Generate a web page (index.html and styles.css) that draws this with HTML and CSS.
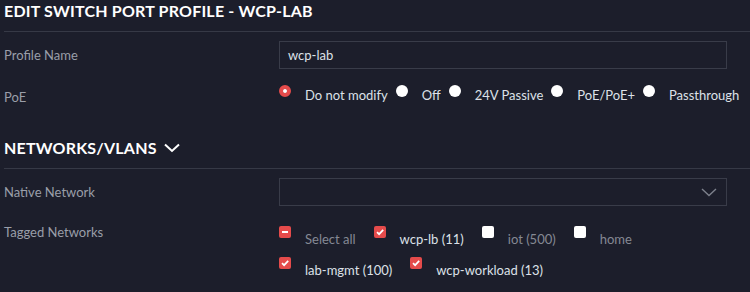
FILE: index.html
```html
<!DOCTYPE html>
<html lang="en">
<head>
    <meta charset="UTF-8">
    <title>Edit Switch Port Profile</title>
    <link rel="stylesheet" href="styles.css">
</head>
<body>

<div class="page">
    <h1 class="section-title first">Edit Switch Port Profile - wcp-lab</h1>

    <div class="row row-profile">
        <div class="label">Profile Name</div>
        <div class="control">
            <div class="text-input">wcp-lab</div>
        </div>
    </div>

    <div class="row row-poe">
        <div class="label label-poe">PoE</div>
        <div class="control options">
            <div class="option"><span class="radio checked"></span><span class="option-text">Do not modify</span></div>
            <div class="option"><span class="radio"></span><span class="option-text">Off</span></div>
            <div class="option"><span class="radio"></span><span class="option-text">24V Passive</span></div>
            <div class="option"><span class="radio"></span><span class="option-text">PoE/PoE+</span></div>
            <div class="option"><span class="radio"></span><span class="option-text">Passthrough</span></div>
        </div>
    </div>

    <h2 class="section-title">
        Networks/VLANs
        <svg class="title-chevron" width="16" height="10" viewBox="0 0 16 10">
            <path d="M1 1.5 L8 8 L15 1.5" fill="none" stroke="#ffffff" stroke-width="2"/>
        </svg>
    </h2>

    <div class="row row-native">
        <div class="label">Native Network</div>
        <div class="control">
            <div class="select">
                <svg class="select-chevron" width="16" height="9" viewBox="0 0 16 9">
                    <path d="M1 1 L8 7.5 L15 1" fill="none" stroke="#7d818c" stroke-width="1.4"/>
                </svg>
            </div>
        </div>
    </div>

    <div class="row row-tagged">
        <div class="label">Tagged Networks</div>
        <div class="control checks">
            <div class="check-line">
                <div class="check-item"><span class="box partial"><span class="dash"></span></span><span class="check-text muted">Select all</span></div>
                <div class="check-item"><span class="box on"><svg width="12" height="12" viewBox="0 0 12 12"><path d="M3 6.2 L5.1 8.2 L9.2 3.9" fill="none" stroke="#fff" stroke-width="1.7"/></svg></span><span class="check-text">wcp-lb (11)</span></div>
                <div class="check-item"><span class="box"></span><span class="check-text muted">iot (500)</span></div>
                <div class="check-item"><span class="box"></span><span class="check-text muted">home</span></div>
            </div>
            <div class="check-line">
                <div class="check-item"><span class="box on"><svg width="12" height="12" viewBox="0 0 12 12"><path d="M3 6.2 L5.1 8.2 L9.2 3.9" fill="none" stroke="#fff" stroke-width="1.7"/></svg></span><span class="check-text">lab-mgmt (100)</span></div>
                <div class="check-item"><span class="box on"><svg width="12" height="12" viewBox="0 0 12 12"><path d="M3 6.2 L5.1 8.2 L9.2 3.9" fill="none" stroke="#fff" stroke-width="1.7"/></svg></span><span class="check-text">wcp-workload (13)</span></div>
            </div>
        </div>
    </div>
</div>

</body>
</html>
```

FILE: styles.css
```css
body {
    margin: 0;
    background-color: #1c1e2b;
    font-family: Lato, "Liberation Sans", sans-serif;
    font-size: 13px;
    color: #dde1e8;
}

.page {
    padding-left: 4px;
    height: 292px;
    overflow: hidden;
}

.section-title {
    margin: 0;
    display: flex;
    align-items: center;
    font-size: 16px;
    line-height: 20px;
    font-weight: 700;
    letter-spacing: 0.2px;
    text-transform: uppercase;
    color: #ffffff;
    padding-bottom: 10px;
    border-bottom: 1px solid #363946;
    white-space: nowrap;
}

.section-title.first {
    padding-top: 1px;
}

h2.section-title {
    margin-top: 33px;
}

.title-chevron {
    margin-left: 7px;
    margin-top: -1px;
}

.row {
    display: flex;
}

.label {
    width: 275px;
    flex: none;
    color: #9a9ea9;
    line-height: 16px;
}

.control {
    width: 448px;
    flex: none;
}

/* Profile name / native network boxes */
.row-profile,
.row-native {
    margin-top: 9px;
    align-items: center;
}

.text-input,
.select {
    box-sizing: border-box;
    height: 28px;
    border: 1px solid #393c49;
    padding: 0 8px;
    line-height: 26px;
    color: #dde1e8;
}

.select {
    display: flex;
    justify-content: flex-end;
    align-items: center;
    padding-right: 9px;
}

/* PoE radios */
.row-poe {
    margin-top: 16px;
}

.label-poe {
    padding-top: 4px;
}

.options {
    display: flex;
}

.option {
    display: flex;
    align-items: flex-start;
    flex: none;
    white-space: nowrap;
}

.radio {
    box-sizing: border-box;
    width: 12px;
    height: 12px;
    border-radius: 50%;
    background-color: #ffffff;
    flex: none;
}

.radio.checked {
    background-color: #e54b4b;
    border: 4px solid #e54b4b;
    background-clip: padding-box;
    position: relative;
}

.radio.checked::after {
    content: "";
    position: absolute;
    left: 0;
    top: 0;
    width: 4px;
    height: 4px;
    border-radius: 50%;
    background-color: #ffffff;
}

.option-text {
    margin-left: 14px;
    margin-right: 8px;
    padding-top: 2px;
    line-height: 16px;
}

/* Tagged networks checkboxes */
.row-tagged {
    margin-top: 18px;
}

.checks {
    padding-top: 2px;
}

.check-line {
    display: flex;
    margin-bottom: 10px;
}

.check-item {
    display: flex;
    align-items: flex-start;
    margin-right: 18px;
    flex: none;
    white-space: nowrap;
}

.box {
    width: 12px;
    height: 12px;
    border-radius: 2px;
    background-color: #ffffff;
    flex: none;
    display: flex;
    align-items: center;
    justify-content: center;
}

.box.on,
.box.partial {
    background-color: #e54b4b;
}

.dash {
    width: 6px;
    height: 2px;
    background-color: #ffffff;
}

.check-text {
    margin-left: 14px;
    padding-top: 5px;
    line-height: 16px;
}

.check-text.muted {
    color: #858994;
}
```
